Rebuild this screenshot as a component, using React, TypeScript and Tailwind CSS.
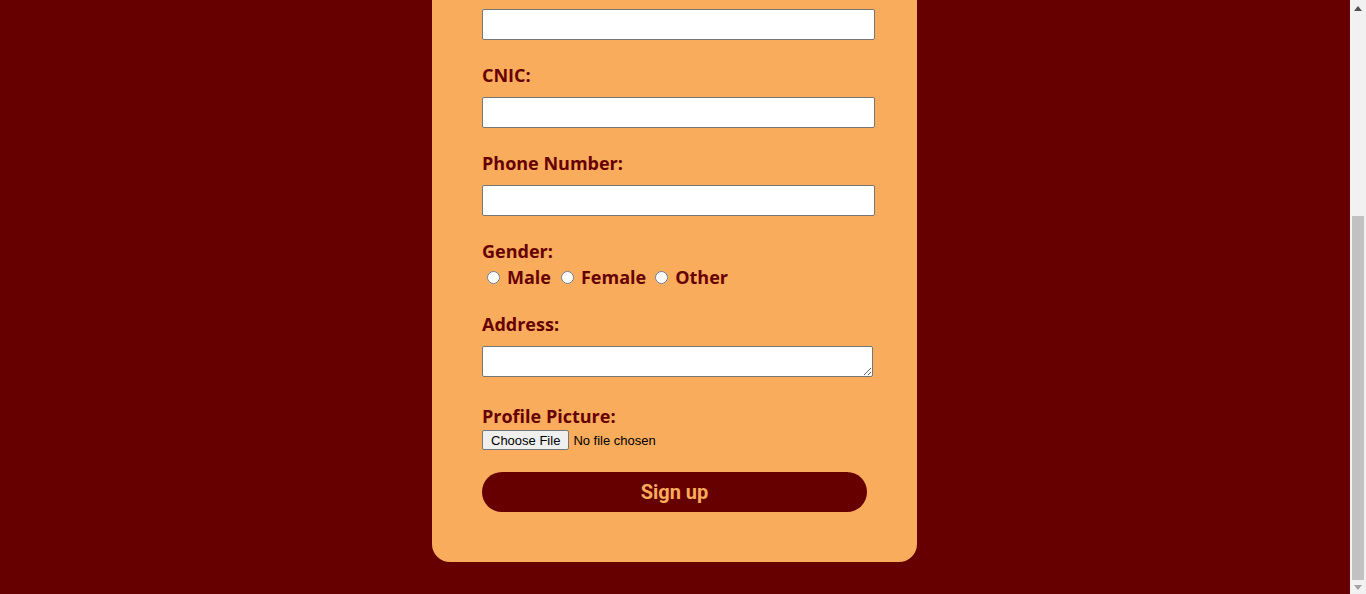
import React from 'react';

const labelCls = "block text-[18px] leading-[25px] font-bold text-[#660000] font-['Open_Sans',sans-serif]";
const inputCls = "block w-[393px] h-[31px] bg-white border border-[#767676] rounded-[2px]";

export default function App() {
  return (
    <div className="flex h-[594px] w-full overflow-hidden">
      {/* page */}
      <div className="flex-1 bg-[#660000] flex justify-center pr-[1px]">
        <div className="w-[485px] h-[562px] bg-[#f9ac5c] rounded-b-[18px] pl-[50px] pt-[9px]">
          <input type="text" className={inputCls + ' mb-[23px]'} />

          <label className={labelCls + ' mb-[9px]'}>CNIC:</label>
          <input type="text" className={inputCls + ' mb-[23px]'} />

          <label className={labelCls + ' mb-[9px]'}>Phone Number:</label>
          <input type="text" className={inputCls + ' mb-[23px]'} />

          <label className={labelCls + ' mb-[1px]'}>Gender:</label>
          <div className="flex items-center h-[24px] mb-[23px] font-['Open_Sans',sans-serif] font-bold text-[18px] text-[#660000]">
            <input type="radio" name="gender" className="ml-[5px] mr-[7px] w-[13px] h-[13px]" />
            <span className="mr-[10px]">Male</span>
            <input type="radio" name="gender" className="mr-[7px] w-[13px] h-[13px]" />
            <span className="mr-[9px]">Female</span>
            <input type="radio" name="gender" className="mr-[7px] w-[13px] h-[13px]" />
            <span>Other</span>
          </div>

          <label className={labelCls + ' mb-[9px]'}>Address:</label>
          <textarea className="block w-[391px] h-[31px] bg-white border border-[#767676] rounded-[2px] mb-[27px]" />

          <label className={labelCls + ' mb-[1px]'}>Profile Picture:</label>
          <input
            type="file"
            className="block h-[20px] text-[13px] text-black font-['Liberation_Sans',Arial,sans-serif] file:h-[20px] file:px-[8px] file:mr-[4px] file:bg-[#efefef] file:border file:border-solid file:border-[#767676] file:rounded-[2px] file:text-black"
          />

          <button className="mt-[22px] w-[385px] h-[40px] rounded-full bg-[#660000] text-[#f9ac5c] text-[20px] font-bold font-['Roboto',sans-serif]">
            Sign up
          </button>
        </div>
      </div>

      {/* scrollbar */}
      <div className="w-[16px] bg-[#f1f1f1] flex flex-col items-center">
        <div className="h-[17px] flex items-center justify-center">
          <svg width="8" height="5" viewBox="0 0 8 5"><path d="M4 0 L8 5 L0 5 Z" fill="#505050" /></svg>
        </div>
        <div className="mt-[199px] w-[12px] h-[364px] bg-[#c1c1c1]" />
        <div className="flex-1 flex items-center justify-center">
          <svg width="8" height="5" viewBox="0 0 8 5"><path d="M0 0 L8 0 L4 5 Z" fill="#a3a3a3" /></svg>
        </div>
      </div>
    </div>
  );
}
